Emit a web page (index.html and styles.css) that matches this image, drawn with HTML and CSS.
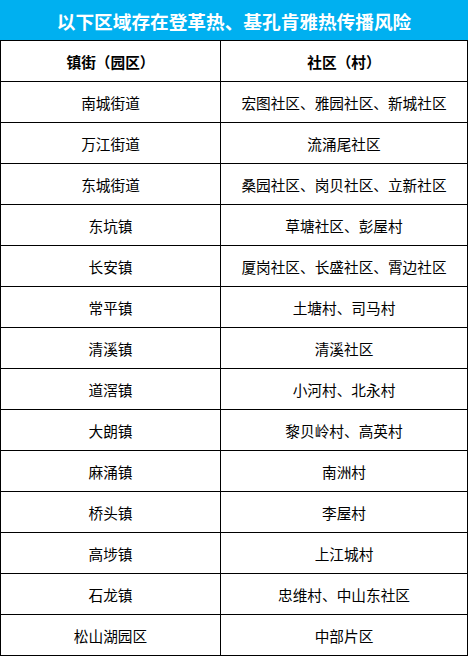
FILE: index.html
```html
<!DOCTYPE html>
<html lang="zh-CN">
<head>
<meta charset="utf-8">
<title>登革热、基孔肯雅热传播风险区域</title>
<link rel="stylesheet" href="styles.css">
</head>
<body>
<div class="sheet">
  <div class="title">以下区域存在登革热、基孔肯雅热传播风险</div>
  <div class="grid">
    <div class="cell head">镇街（园区）</div><div class="cell head">社区（村）</div>
    <div class="cell">南城街道</div><div class="cell">宏图社区、雅园社区、新城社区</div>
    <div class="cell">万江街道</div><div class="cell">流涌尾社区</div>
    <div class="cell">东城街道</div><div class="cell">桑园社区、岗贝社区、立新社区</div>
    <div class="cell">东坑镇</div><div class="cell">草塘社区、彭屋村</div>
    <div class="cell">长安镇</div><div class="cell">厦岗社区、长盛社区、霄边社区</div>
    <div class="cell">常平镇</div><div class="cell">土塘村、司马村</div>
    <div class="cell">清溪镇</div><div class="cell">清溪社区</div>
    <div class="cell">道滘镇</div><div class="cell">小河村、北永村</div>
    <div class="cell">大朗镇</div><div class="cell">黎贝岭村、高英村</div>
    <div class="cell">麻涌镇</div><div class="cell">南洲村</div>
    <div class="cell">桥头镇</div><div class="cell">李屋村</div>
    <div class="cell">高埗镇</div><div class="cell">上江城村</div>
    <div class="cell">石龙镇</div><div class="cell">忠维村、中山东社区</div>
    <div class="cell">松山湖园区</div><div class="cell">中部片区</div>
  </div>
</div>
</body>
</html>
```

FILE: styles.css
```css
html, body {
  margin: 0;
  padding: 0;
  background: #ffffff;
}

body {
  font-family: "Noto Sans CJK SC", "Noto Sans", sans-serif;
  color: #000000;
}

.sheet {
  width: 468px;
}

.title {
  height: 40px;
  background: #00b0f0;
  border-bottom: 1px solid #000000;
  color: #ffffff;
  font-size: 18.67px;
  font-weight: 700;
  display: flex;
  align-items: center;
  justify-content: center;
}

.grid {
  display: grid;
  grid-template-columns: 220px 247px;
  grid-auto-rows: 41px;
  border-left: 1px solid #000000;
}

.cell {
  box-sizing: border-box;
  border-right: 1px solid #000000;
  border-bottom: 1px solid #000000;
  display: flex;
  align-items: center;
  justify-content: center;
  font-size: 14.67px;
  padding-top: 1px;
}

.head {
  font-weight: 700;
}
```
